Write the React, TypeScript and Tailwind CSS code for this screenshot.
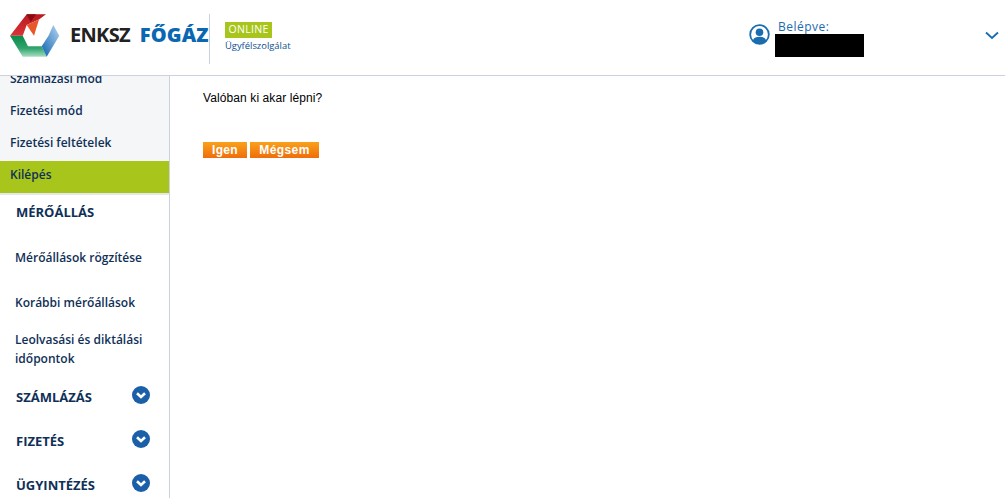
const font = { fontFamily: '"Open Sans", sans-serif' };

const subItems = ['Számlázási mód', 'Fizetési mód', 'Fizetési feltételek'];

const meterItems = ['Mérőállások rögzítése', 'Korábbi mérőállások'];

function Logo() {
  return (
    <svg width="50" height="44" viewBox="10 14 50 44" className="shrink-0">
      <defs>
        <linearGradient id="red" x1="0" y1="0" x2="0" y2="1">
          <stop offset="0" stopColor="#b8191f" />
          <stop offset="1" stopColor="#d9343a" />
        </linearGradient>
        <linearGradient id="green" x1="0" y1="0" x2="0" y2="1">
          <stop offset="0" stopColor="#0a8a4a" />
          <stop offset="0.6" stopColor="#2fa56c" />
          <stop offset="1" stopColor="#a8dcc0" />
        </linearGradient>
        <linearGradient id="blue" x1="0" y1="1" x2="1" y2="0">
          <stop offset="0" stopColor="#0b62b0" />
          <stop offset="1" stopColor="#b9d6f0" />
        </linearGradient>
      </defs>
      <polygon points="10,35.7 26.7,14.3 46,14.3 39,19.5 26.7,25 22.7,35.7" fill="url(#red)" />
      <polygon points="26.7,14.3 36,14.3 30.7,22" fill="#8c0c12" />
      <polygon points="26.7,25 39,19.5 34,35.7" fill="#e8562a" />
      <polygon points="10,35.7 22.7,35.7 28,46.3 41.7,46.3 46.7,56.7 22.7,56.7" fill="url(#green)" />
      <polygon points="53.3,25 59.3,35.7 46.7,56.7 41.7,46.3 48.5,35.7" fill="url(#blue)" />
    </svg>
  );
}

function ChevronCircle() {
  return (
    <svg width="18" height="18" viewBox="0 0 18 18" className="mt-[2px] shrink-0">
      <circle cx="9" cy="9" r="9" fill="#1a5fa8" />
      <path d="M5 7.2 L9 11 L13 7.2" fill="none" stroke="#fff" strokeWidth="2.6" />
    </svg>
  );
}

function UserIcon() {
  return (
    <svg width="21" height="21" viewBox="0 0 21 21" className="shrink-0">
      <circle cx="10.5" cy="10.5" r="9.3" fill="none" stroke="#1a6cb0" strokeWidth="1.8" />
      <circle cx="10.5" cy="8.2" r="3.8" fill="#1a6cb0" />
      <path d="M3.8 16.5 C5 13.5 7.5 12.8 10.5 12.8 C13.5 12.8 16 13.5 17.2 16.5 C15.5 18.5 13 19.6 10.5 19.6 C8 19.6 5.5 18.5 3.8 16.5 Z" fill="#1a6cb0" />
    </svg>
  );
}

function Section({ title, top }: { title: string; top: string }) {
  return (
    <div className={`flex h-[44px] items-start justify-between pl-[16px] pr-[19px] ${top}`}>
      <span className="pt-[3px] text-[13px] leading-[20px] font-bold text-[#0f3057]">{title}</span>
      <ChevronCircle />
    </div>
  );
}

export default function App() {
  return (
    <div className="flex h-[498px] w-[1005px] flex-col overflow-hidden bg-white" style={font}>
      <header className="flex h-[76px] shrink-0 items-start border-b border-[#c9d2de] bg-white">
        <div className="ml-[10px] mt-[14px] flex h-[50px] w-[200px] items-start border-r border-[#c9d2de]">
          <Logo />
          <span className="ml-[10px] mt-[8px] text-[20px] leading-[26px] font-bold text-[#222] tracking-[-0.7px]">ENKSZ</span>
          <span className="ml-[10px] mt-[8px] text-[20px] leading-[26px] font-extrabold text-[#0a67b2] tracking-[0.1px]">FŐGÁZ</span>
        </div>
        <div className="ml-[15px] mt-[22px] flex flex-col items-start">
          <span className="flex h-[16px] w-[47px] items-center justify-center bg-[#a8c51b] text-[10.5px] tracking-[0.3px] text-white">ONLINE</span>
          <span className="mt-[1px] text-[9.4px] leading-[14px] text-[#0a4f94]">Ügyfélszolgálat</span>
        </div>
        <div className="ml-auto mt-[19px] flex items-start">
          <div className="mt-[5px] ml-[1px]"><UserIcon /></div>
          <div className="ml-[5px] flex w-[89px] flex-col">
            <span className="ml-[3px] text-[12px] leading-[15px] tracking-[0.5px] text-[#1a6cb0]">Belépve:</span>
            <div className="h-[23px] w-[89px] bg-black" />
          </div>
          <svg width="14" height="9" viewBox="0 0 14 9" className="ml-[121px] mr-[6px] mt-[12px]">
            <path d="M1 1.5 L7 7 L13 1.5" fill="none" stroke="#1a6cb0" strokeWidth="1.8" />
          </svg>
        </div>
      </header>

      <div className="flex min-h-0 flex-1">
        <aside className="w-[170px] shrink-0 overflow-hidden border-r border-[#c9d2de]">
          <div className="-mt-[11px] bg-[#f4f6f8]">
            {subItems.map((item) => (
              <div key={item} className="flex h-[32px] items-center pb-[5px] pl-[10px] text-[12px] font-semibold text-[#0f3057]">
                {item}
              </div>
            ))}
            <div className="flex h-[32px] items-center bg-[#a8c51b] pb-[5px] pl-[10px] text-[12px] font-semibold text-[#0f3057]">
              Kilépés
            </div>
          </div>
          <div className="border-t-2 border-[#e4e8ed]">
            <div className="h-[40px] pl-[16px] pt-[7px] text-[13px] leading-[20px] font-bold text-[#0f3057]">MÉRŐÁLLÁS</div>
            {meterItems.map((item) => (
              <div key={item} className="flex h-[45px] items-center pl-[15px] text-[12px] font-semibold text-[#0f3057]">
                {item}
              </div>
            ))}
            <div className="px-[15px] pt-[5px] text-[12px] leading-[19px] font-semibold text-[#0f3057]">
              Leolvasási és diktálási időpontok
            </div>
            <Section title="SZÁMLÁZÁS" top="mt-[16px]" />
            <Section title="FIZETÉS" top="" />
            <Section title="ÜGYINTÉZÉS" top="" />
          </div>
        </aside>

        <main className="flex-1 pl-[33px] pt-[14px]" style={{ fontFamily: '"Liberation Sans", Arial, sans-serif' }}>
          <p className="text-[12px] leading-[16px] tracking-[0.1px] text-black">Valóban ki akar lépni?</p>
          <div className="mt-[36px] flex gap-[3px]">
            <button className="h-[16px] w-[44px] bg-gradient-to-b from-[#f9a11b] to-[#ef6c0c] text-[12px] leading-[16px] font-bold tracking-[0.3px] text-white">Igen</button>
            <button className="h-[16px] w-[69px] bg-gradient-to-b from-[#f9a11b] to-[#ef6c0c] text-[12px] leading-[16px] font-bold tracking-[0.4px] text-white">Mégsem</button>
          </div>
        </main>
      </div>
    </div>
  );
}
